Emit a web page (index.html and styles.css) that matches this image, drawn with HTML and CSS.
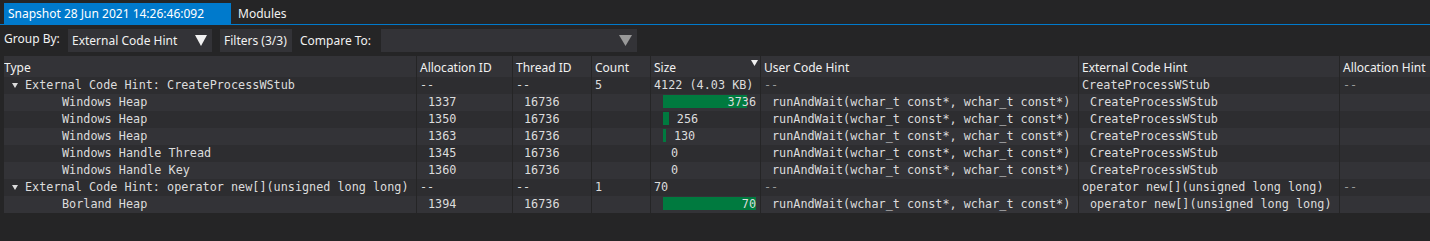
FILE: index.html
```html
<!DOCTYPE html>
<html>
<head>
<meta charset="utf-8">
<link rel="stylesheet" href="styles.css">
</head>
<body>
<div class="tabs">
  <div class="tab active">Snapshot 28 Jun 2021 14:26:46:092</div>
  <div class="tab">Modules</div>
</div>
<div class="toolbar">
  <div class="lbl lbl-group">Group By:</div>
  <div class="combo combo-group">
    <span>External Code Hint</span>
    <svg class="caret" width="12" height="11" viewBox="0 0 12 11"><polygon points="0,0 12,0 6,11" fill="#f1f1f1"/></svg>
  </div>
  <div class="btn">Filters (3/3)</div>
  <div class="lbl lbl-compare">Compare To:</div>
  <div class="combo combo-compare">
    <span></span>
    <svg class="caret" width="13" height="11" viewBox="0 0 13 11"><polygon points="0,0 13,0 6.5,11" fill="#999999"/></svg>
  </div>
</div>
<div class="grid">
  <div class="row head">
    <div class="c c-type">Type</div>
    <div class="c">Allocation ID</div>
    <div class="c">Thread ID</div>
    <div class="c">Count</div>
    <div class="c c-size">Size<svg class="sort" width="7" height="6" viewBox="0 0 7 6"><polygon points="0,0 7,0 3.5,6" fill="#f1f1f1"/></svg></div>
    <div class="c">User Code Hint</div>
    <div class="c">External Code Hint</div>
    <div class="c">Allocation Hint</div>
  </div>

  <div class="row group odd">
    <div class="c c-type"><svg class="exp" width="6" height="5" viewBox="0 0 6 5"><polygon points="0,0 6,0 3,5" fill="#dcdcdc"/></svg>External Code Hint: CreateProcessWStub</div>
    <div class="c">--</div>
    <div class="c">--</div>
    <div class="c">5</div>
    <div class="c">4122 (4.03 KB)</div>
    <div class="c dim">--</div>
    <div class="c">CreateProcessWStub</div>
    <div class="c dim">--</div>
  </div>

  <div class="row item even">
    <div class="c c-type">Windows Heap</div>
    <div class="c">1337</div>
    <div class="c">16736</div>
    <div class="c"></div>
    <div class="c c-bar"><span class="bar" style="width:84.3px"></span><span class="val val-in">3736</span></div>
    <div class="c">runAndWait(wchar_t const*, wchar_t const*)</div>
    <div class="c">CreateProcessWStub</div>
    <div class="c"></div>
  </div>

  <div class="row item odd">
    <div class="c c-type">Windows Heap</div>
    <div class="c">1350</div>
    <div class="c">16736</div>
    <div class="c"></div>
    <div class="c c-bar"><span class="bar" style="width:5.8px"></span><span class="val">256</span></div>
    <div class="c">runAndWait(wchar_t const*, wchar_t const*)</div>
    <div class="c">CreateProcessWStub</div>
    <div class="c"></div>
  </div>

  <div class="row item even">
    <div class="c c-type">Windows Heap</div>
    <div class="c">1363</div>
    <div class="c">16736</div>
    <div class="c"></div>
    <div class="c c-bar"><span class="bar" style="width:2.9px"></span><span class="val">130</span></div>
    <div class="c">runAndWait(wchar_t const*, wchar_t const*)</div>
    <div class="c">CreateProcessWStub</div>
    <div class="c"></div>
  </div>

  <div class="row item odd">
    <div class="c c-type">Windows Handle Thread</div>
    <div class="c">1345</div>
    <div class="c">16736</div>
    <div class="c"></div>
    <div class="c c-bar"><span class="bar" style="width:0px"></span><span class="val">0</span></div>
    <div class="c">runAndWait(wchar_t const*, wchar_t const*)</div>
    <div class="c">CreateProcessWStub</div>
    <div class="c"></div>
  </div>

  <div class="row item even">
    <div class="c c-type">Windows Handle Key</div>
    <div class="c">1360</div>
    <div class="c">16736</div>
    <div class="c"></div>
    <div class="c c-bar"><span class="bar" style="width:0px"></span><span class="val">0</span></div>
    <div class="c">runAndWait(wchar_t const*, wchar_t const*)</div>
    <div class="c">CreateProcessWStub</div>
    <div class="c"></div>
  </div>

  <div class="row group odd">
    <div class="c c-type"><svg class="exp" width="6" height="5" viewBox="0 0 6 5"><polygon points="0,0 6,0 3,5" fill="#dcdcdc"/></svg>External Code Hint: operator new[](unsigned long long)</div>
    <div class="c">--</div>
    <div class="c">--</div>
    <div class="c">1</div>
    <div class="c">70</div>
    <div class="c dim">--</div>
    <div class="c">operator new[](unsigned long long)</div>
    <div class="c dim">--</div>
  </div>

  <div class="row item even">
    <div class="c c-type">Borland Heap</div>
    <div class="c">1394</div>
    <div class="c">16736</div>
    <div class="c"></div>
    <div class="c c-bar"><span class="bar" style="width:93px"></span><span class="val val-in">70</span></div>
    <div class="c">runAndWait(wchar_t const*, wchar_t const*)</div>
    <div class="c">operator new[](unsigned long long)</div>
    <div class="c"></div>
  </div>
</div>
</body>
</html>
```

FILE: styles.css
```css
html, body {
  margin: 0;
  padding: 0;
  background: #252526;
  overflow: hidden;
}
body {
  width: 1430px;
  height: 241px;
  font-family: "Noto Sans", "Open Sans", sans-serif;
  font-size: 12px;
  color: #f1f1f1;
}

/* tabs */
.tabs {
  display: flex;
  height: 21px;
  padding: 3px 0 0 4px;
  border-bottom: 1px solid #007acc;
}
.tab {
  height: 21px;
  line-height: 20px;
  padding-top: 1px;
  box-sizing: border-box;
  padding-left: 7px;
  white-space: nowrap;
  color: #f1f1f1;
}
.tab.active {
  width: 227px;
  padding-left: 4px;
  background: #007acc;
  color: #ffffff;
}

/* toolbar */
.toolbar {
  display: flex;
  align-items: center;
  gap: 8px;
  height: 23px;
  padding: 4px 4px;
}
.lbl {
  line-height: 23px;
  white-space: nowrap;
}
.lbl-group {
  width: 56px;
  padding-bottom: 4px;
}
.lbl-compare {
  width: 73px;
}
.combo {
  display: flex;
  align-items: center;
  justify-content: space-between;
  height: 23px;
  line-height: 23px;
  padding: 0 5px 0 4px;
  background: #333337;
  box-sizing: border-box;
}
.combo-group { width: 144px; }
.combo-compare { width: 256px; }
.caret { display: block; }
.btn {
  width: 72px;
  height: 23px;
  line-height: 23px;
  padding-left: 4px;
  box-sizing: border-box;
  background: #333337;
  white-space: nowrap;
}

/* grid */
.grid {
  margin-left: 4px;
}
.row {
  display: grid;
  grid-template-columns: 412px 96px 79px 59px 110px 318px 261px 1fr;
  height: 17px;
}
.c {
  border-left: 1px solid #252526;
  white-space: nowrap;
  overflow: hidden;
  box-sizing: border-box;
}
.c.c-type { border-left: none; }

.head {
  height: 21px;
  background: #333337;
}
.head .c {
  line-height: 19px;
  padding: 2px 0 0 3px;
  color: #f1f1f1;
}
.head .c.c-type { padding-left: 0; }
.c-size { position: relative; }
.sort {
  position: absolute;
  right: 2px;
  top: 4px;
}

.odd { background: #2d2d30; }
.even { background: #333337; }

.group .c, .item .c {
  font-family: "DejaVu Sans Mono", "Liberation Mono", monospace;
  font-size: 11.8px;
  line-height: 17px;
  color: #dcdcdc;
}
.group .c { padding-left: 3px; }
.group .c.c-type {
  display: flex;
  align-items: center;
  padding-left: 8px;
}
.exp {
  display: block;
  margin-right: 7px;
  flex: none;
}
.group .c.dim { color: #9a9a9a; }

.item .c { padding-left: 11px; }
.item .c.c-type { padding-left: 58px; }

.item .c.c-bar {
  position: relative;
  display: flex;
  padding-left: 12px;
  padding-right: 4px;
}
.bar {
  display: block;
  flex: none;
  height: 13px;
  margin-top: 1px;
  background: #007a3f;
}
.val {
  margin-left: 8px;
}
.val.val-in {
  position: absolute;
  right: 4px;
  top: 0;
  margin-left: 0;
}
```
